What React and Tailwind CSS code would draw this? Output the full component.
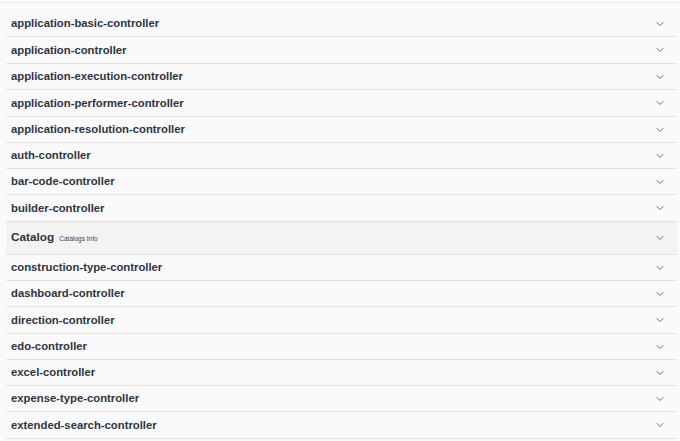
import { ChevronDown } from 'lucide-react'

// Swagger-style tag list, all groups collapsed.
const before = [
  { name: 'application-basic-controller', h: 'h-[26px]' },
  { name: 'application-controller', h: 'h-[27px]' },
  { name: 'application-execution-controller', h: 'h-[26px]' },
  { name: 'application-performer-controller', h: 'h-[27px]' },
  { name: 'application-resolution-controller', h: 'h-[26px]' },
  { name: 'auth-controller', h: 'h-[26px]' },
  { name: 'bar-code-controller', h: 'h-[26px]' },
  { name: 'builder-controller', h: 'h-[27px]' },
]

const after = [
  { name: 'construction-type-controller', h: 'h-[26px]' },
  { name: 'dashboard-controller', h: 'h-[26px]' },
  { name: 'direction-controller', h: 'h-[27px]' },
  { name: 'edo-controller', h: 'h-[26px]' },
  { name: 'excel-controller', h: 'h-[26px]' },
  { name: 'expense-type-controller', h: 'h-[26px]' },
  { name: 'extended-search-controller', h: 'h-[27px]' },
]

function Chevron() {
  return <ChevronDown className="h-[12px] w-[12px] text-[#4a4d55]" strokeWidth={1.6} />
}

function TagRow({ name, h }) {
  return (
    <div className={`flex ${h} items-center justify-between border-b border-[#e2e2e4] pl-[5px] pr-[11px]`}>
      <span className="text-[11.3px] font-bold text-[#2f3440]">{name}</span>
      <Chevron />
    </div>
  )
}

export default function App() {
  return (
    <div
      className="min-h-[441px] w-[680px] overflow-hidden bg-[#fafafa]"
      style={{ fontFamily: '"Liberation Sans", Arial, sans-serif' }}
    >
      <div className="h-[3px] border-b border-[#ececec]" />
      <div className="ml-[6px] mr-[3px] mt-[8px]">
        {before.map((t) => (
          <TagRow key={t.name} {...t} />
        ))}
        <div className="flex h-[33px] items-center justify-between border-b border-[#e2e2e4] bg-[#f3f3f3] pl-[5px] pr-[11px]">
          <div className="flex items-baseline gap-[5px]">
            <span className="text-[11.8px] font-bold text-[#2f3440]">Catalog</span>
            <span className="text-[6.5px] text-[#3b4151]">Catalogs Info</span>
          </div>
          <Chevron />
        </div>
        {after.map((t) => (
          <TagRow key={t.name} {...t} />
        ))}
      </div>
    </div>
  )
}
